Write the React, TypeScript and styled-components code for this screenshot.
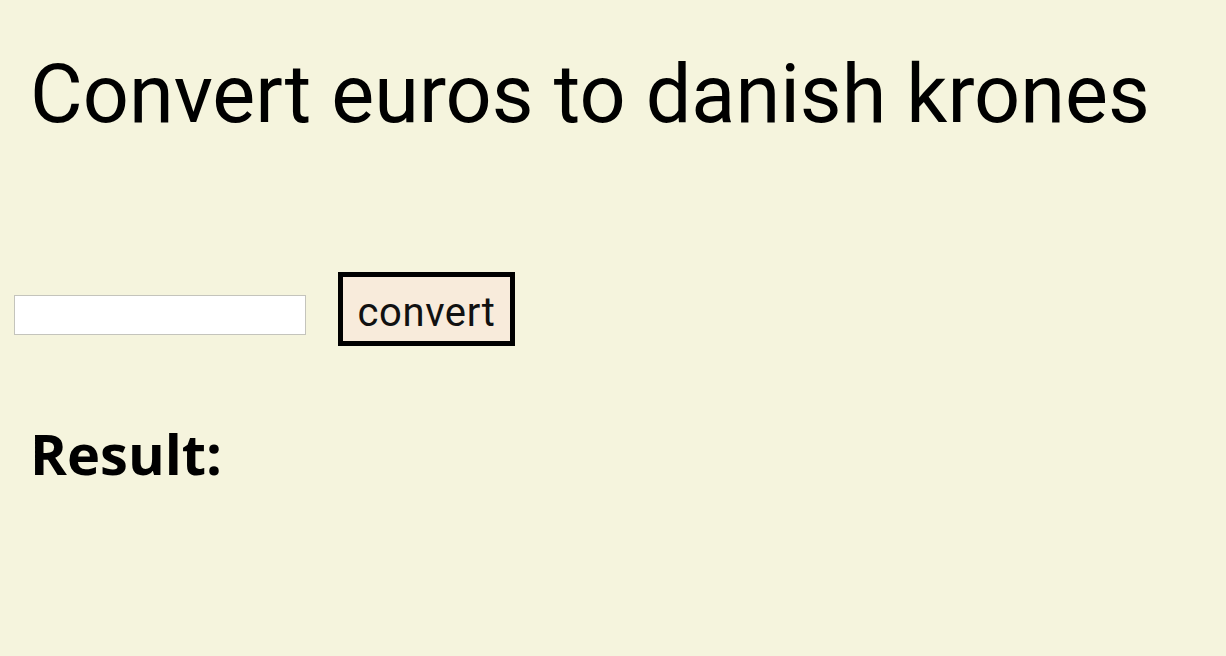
import React from "react";
import styled, { createGlobalStyle } from "styled-components";

const Global = createGlobalStyle`
  html, body { margin: 0; padding: 0; background: #f5f4dd; }
  body { font-family: Roboto, "Liberation Sans", sans-serif; color: #000; }
`;

const Page = styled.main`
  display: flex;
  flex-direction: column;
  align-items: flex-start;
  min-height: 656px;
  padding: 0 0 0 14px;
  box-sizing: border-box;
`;

const Title = styled.h1`
  margin: 47px 0 0 16px;
  font-family: Roboto, sans-serif;
  font-weight: 400;
  font-size: 81px;
  line-height: 96px;
  letter-spacing: 0;
`;

const Row = styled.div`
  display: flex;
  align-items: center;
  gap: 32px;
  margin-top: 129px;
`;

const Input = styled.input`
  width: 292px;
  height: 40px;
  box-sizing: border-box;
  border: 1px solid #c4c4bc;
  background: #fff;
  margin-top: 11px;
  padding: 0;
`;

const Button = styled.button`
  width: 177px;
  height: 74px;
  box-sizing: border-box;
  border: 5px solid #000;
  background: #f8ebdb;
  font-family: Roboto, sans-serif;
  font-size: 40px;
  letter-spacing: 0.6px;
  color: #111;
  padding: 6px 0 0;
`;

const Result = styled.h2`
  margin: 73px 0 0 16px;
  font-family: "Open Sans", sans-serif;
  font-weight: 700;
  font-size: 56px;
  line-height: 68px;
`;

export default function App() {
  return (
    <>
      <Global />
      <Page>
        <Title>Convert euros to danish krones</Title>
        <Row>
          <Input type="text" />
          <Button>convert</Button>
        </Row>
        <Result>Result:</Result>
      </Page>
    </>
  );
}
